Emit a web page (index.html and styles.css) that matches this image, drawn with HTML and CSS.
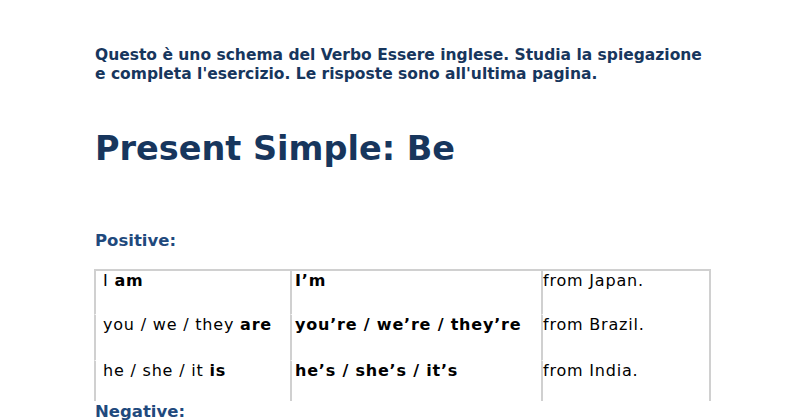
FILE: index.html
```html
<!DOCTYPE html>
<html>
<head>
<meta charset="utf-8">
<link rel="stylesheet" href="styles.css">
</head>
<body>
<div class="page">
  <p class="intro">Questo è uno schema del Verbo Essere inglese. Studia la spiegazione e completa l'esercizio. Le risposte sono all'ultima pagina.</p>
  <h1 class="title">Present Simple: Be</h1>
  <h2 class="section">Positive:</h2>
  <table class="grid">
    <tr class="r1">
      <td class="c1">I <b>am</b></td>
      <td class="c2"><b>I’m</b></td>
      <td class="c3">from Japan.</td>
    </tr>
    <tr class="r2">
      <td class="c1">you / we / they <b>are</b></td>
      <td class="c2"><b>you’re / we’re / they’re</b></td>
      <td class="c3">from Brazil.</td>
    </tr>
    <tr class="r3">
      <td class="c1">he / she / it <b>is</b></td>
      <td class="c2"><b>he’s / she’s / it’s</b></td>
      <td class="c3">from India.</td>
    </tr>
  </table>
  <h2 class="section neg">Negative:</h2>
</div>
</body>
</html>
```
FILE: styles.css
```css
html, body {
  margin: 0;
  padding: 0;
  background: #fff;
}
body {
  font-family: "DejaVu Sans", Verdana, sans-serif;
  color: #000;
}
.page {
  padding: 46px 0 0 95px;
  width: 620px;
}
.intro {
  margin: 0;
  font-size: 15.5px;
  line-height: 19px;
  font-weight: bold;
  color: #17365d;
  width: 614px;
}
.title {
  margin: 45px 0 0 0;
  font-size: 33.5px;
  line-height: 40px;
  font-weight: bold;
  color: #17365d;
}
.section {
  margin: 62px 0 0 0;
  font-size: 16.5px;
  line-height: 20px;
  font-weight: bold;
  color: #1f497d;
}
.grid {
  margin: 18px 0 0 -1px;
  border-collapse: separate;
  border-spacing: 0;
  width: 617px;
  font-size: 16px;
  letter-spacing: 0.8px;
  border-top: 2px solid #d0d0d0;
  border-right: 2px solid #d0d0d0;
}
.grid td {
  vertical-align: top;
  padding: 0;
  line-height: 20px;
  border-left: 2px solid #d0d0d0;
  border-top: 1px solid #fff;
}
.r1 td {
  border-top: 0;
  height: 43px;
}
.r2 td {
  height: 45px;
}
.r3 td {
  height: 40px;
}
.grid td.c1 { width: 187px; padding-left: 7px; }
.grid td.c2 { width: 246px; padding-left: 3px; }
.grid td.c3 { padding-left: 0; }
.section.neg {
  margin-top: 1px;
}
```
